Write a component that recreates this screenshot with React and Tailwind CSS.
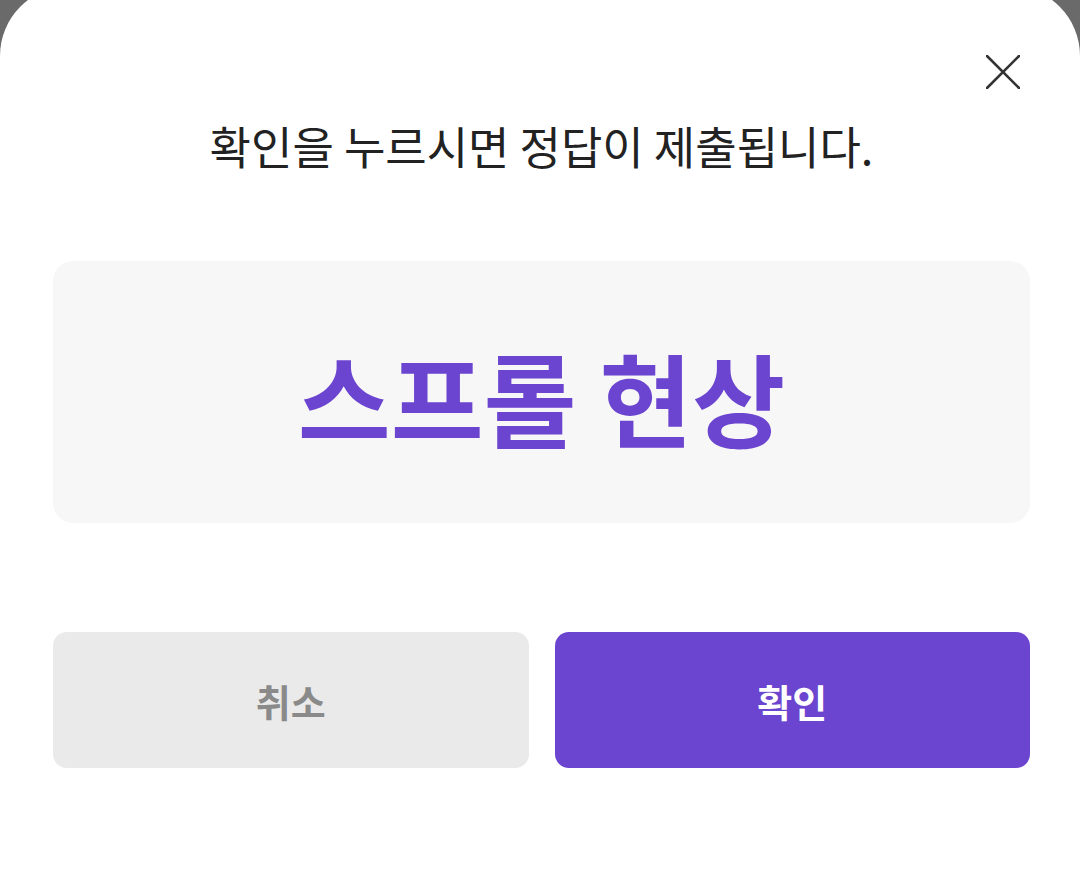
export default function App() {
  return (
    <div className="h-[872px] overflow-hidden bg-[#6a6a6a]" style={{ fontFamily: '"Noto Sans CJK KR", "Noto Sans", sans-serif' }}>
      <div className="-mt-[14px] h-[886px] rounded-t-[70px] bg-white pl-[53px] pr-[50px]">
        <div className="flex justify-end pt-[69px] pr-[10px]">
          <button className="h-[34px] w-[34px] text-[#333]" aria-label="닫기">
            <svg viewBox="0 0 34 34" className="h-[34px] w-[34px]" fill="none" stroke="currentColor" strokeWidth="2.6" strokeLinecap="round">
              <path d="M1 1L33 33M33 1L1 33" />
            </svg>
          </button>
        </div>
        <p className="mt-[27px] text-center text-[45px] leading-[60px] text-[#222]">
          확인을 누르시면 정답이 제출됩니다.
        </p>
        <div className="mt-[85px] flex h-[262px] items-center justify-center rounded-[20px] bg-[#f7f7f8] pt-[8px]">
          <span className="text-[101px] font-bold leading-none text-[#6b45cf]">스프롤 현상</span>
        </div>
        <div className="mt-[109px] grid grid-cols-2 gap-[26px]">
          <button className="h-[136px] rounded-[14px] bg-[#eaeaea] text-[38px] font-bold text-[#8a8a8a]">
            취소
          </button>
          <button className="h-[136px] rounded-[14px] bg-[#6b45cf] text-[38px] font-bold text-white">
            확인
          </button>
        </div>
      </div>
    </div>
  );
}
